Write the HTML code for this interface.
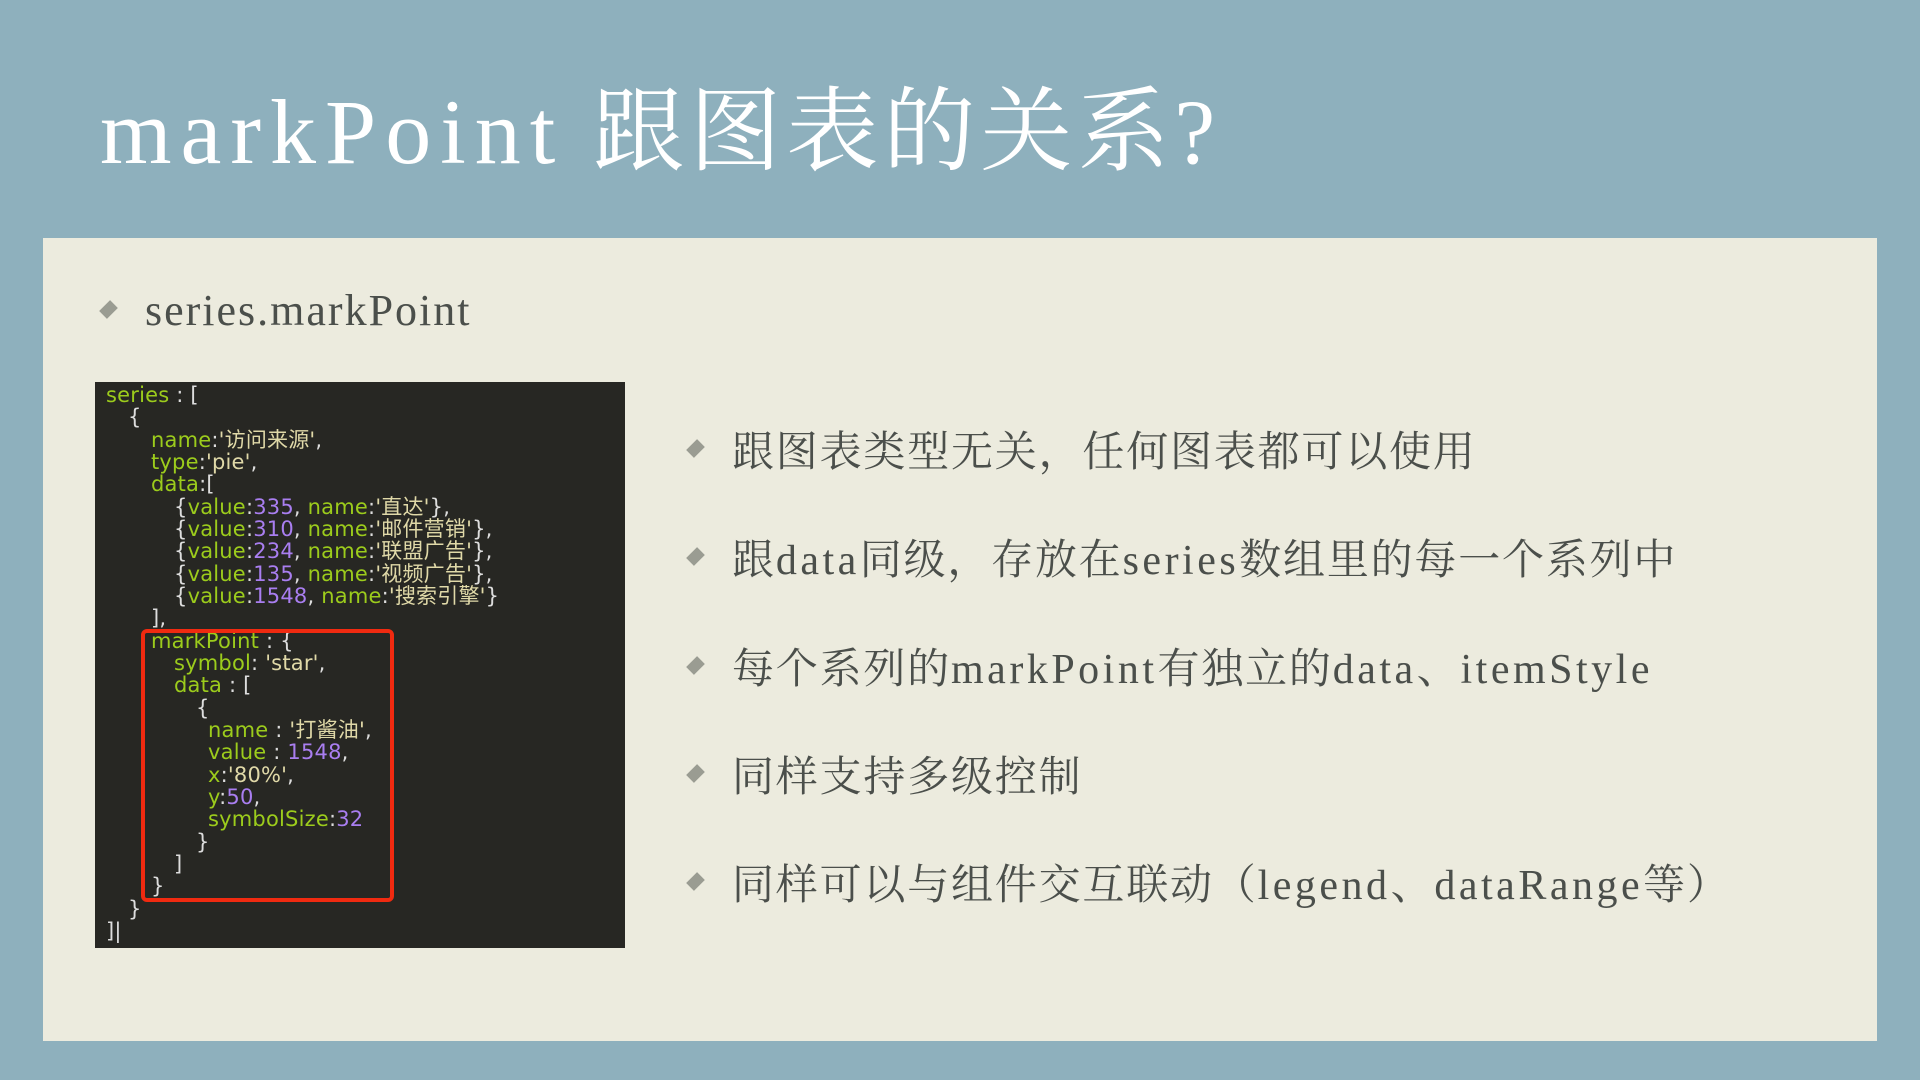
<!DOCTYPE html>
<html><head><meta charset="utf-8"><style>
body{margin:0;width:1920px;height:1080px;overflow:hidden;background:#8eb0bd;font-family:"Liberation Serif","Noto Serif CJK SC",serif;position:relative}
.title{position:absolute;left:100px;top:72px;font-size:92px;color:#fff;white-space:nowrap;line-height:120px;letter-spacing:5px}
.title .l{letter-spacing:9px}
.panel{position:absolute;left:43px;top:238px;width:1834px;height:803px;background:#ecebde}
.sub{position:absolute;left:145px;top:283px;font-size:44px;color:#4b4f4b;line-height:56px;letter-spacing:2px}
.dia{position:absolute;width:11px;height:11px;background:#9a9c92;transform:rotate(45deg) scaleY(1.4)}
.code{position:absolute;left:95px;top:382px;width:530px;height:566px;background:#272723;font-family:"DejaVu Sans","Noto Sans CJK SC",sans-serif;font-size:21px;color:#e0d9a8;white-space:pre;letter-spacing:0.2px}
.code div{position:absolute;height:22.3px;line-height:22.3px}
.g{color:#9ccc1c}.p{color:#a97ef0}.y{color:#d9cd80}.w{color:#ddd}
.red{position:absolute;left:141px;top:629px;width:245px;height:265px;border:4px solid #f02a10;border-radius:6px}
.b{position:absolute;left:732px;font-size:42px;color:#4b4f4b;white-space:nowrap;line-height:56px;letter-spacing:1.8px}
.b i{font-style:normal;letter-spacing:3.5px}
</style></head><body>
<div class="title"><span class="l">markPoint</span> 跟图表的关系?</div>
<div class="panel"></div>
<div class="dia" style="left:103px;top:304px"></div>
<div class="sub">series.markPoint</div>
<div class="code">
<div style="left:11px;top:2px"><span class="g">series</span><span class="w"> : [</span></div>
<div style="left:33px;top:24px" class="w">{</div>
<div style="left:56px;top:47px"><span class="g">name</span><span class="w">:</span>'访问来源'<span class="w">,</span></div>
<div style="left:56px;top:69px"><span class="g">type</span><span class="w">:</span>'pie'<span class="w">,</span></div>
<div style="left:56px;top:91px"><span class="g">data</span><span class="w">:[</span></div>
<div style="left:79px;top:114px"><span class="w">{</span><span class="g">value</span><span class="w">:</span><span class="p">335</span><span class="w">, </span><span class="g">name</span><span class="w">:</span>'直达'<span class="w">},</span></div>
<div style="left:79px;top:136px"><span class="w">{</span><span class="g">value</span><span class="w">:</span><span class="p">310</span><span class="w">, </span><span class="g">name</span><span class="w">:</span>'邮件营销'<span class="w">},</span></div>
<div style="left:79px;top:158px"><span class="w">{</span><span class="g">value</span><span class="w">:</span><span class="p">234</span><span class="w">, </span><span class="g">name</span><span class="w">:</span>'联盟广告'<span class="w">},</span></div>
<div style="left:79px;top:181px"><span class="w">{</span><span class="g">value</span><span class="w">:</span><span class="p">135</span><span class="w">, </span><span class="g">name</span><span class="w">:</span>'视频广告'<span class="w">},</span></div>
<div style="left:79px;top:203px"><span class="w">{</span><span class="g">value</span><span class="w">:</span><span class="p">1548</span><span class="w">, </span><span class="g">name</span><span class="w">:</span>'搜索引擎'<span class="w">}</span></div>
<div style="left:56px;top:225px" class="w">],</div>
<div style="left:56px;top:248px"><span class="g">markPoint</span><span class="w"> : {</span></div>
<div style="left:79px;top:270px"><span class="g">symbol</span><span class="w">: </span>'star'<span class="w">,</span></div>
<div style="left:79px;top:292px"><span class="g">data</span><span class="w"> : [</span></div>
<div style="left:101px;top:315px" class="w">{</div>
<div style="left:113px;top:337px"><span class="g">name</span><span class="w"> : </span>'打酱油'<span class="w">,</span></div>
<div style="left:113px;top:359px"><span class="g">value</span><span class="w"> : </span><span class="p">1548</span><span class="w">,</span></div>
<div style="left:113px;top:382px"><span class="g">x</span><span class="w">:</span>'80%'<span class="w">,</span></div>
<div style="left:113px;top:404px"><span class="g">y</span><span class="w">:</span><span class="p">50</span><span class="w">,</span></div>
<div style="left:113px;top:426px"><span class="g">symbolSize</span><span class="w">:</span><span class="p">32</span></div>
<div style="left:101px;top:449px" class="w">}</div>
<div style="left:79px;top:471px" class="w">]</div>
<div style="left:56px;top:493px" class="w">}</div>
<div style="left:33px;top:516px" class="w">}</div>
<div style="left:11px;top:538px" class="w">]|</div>
</div>
<div class="red"></div>
<div class="dia" style="left:690px;top:443px"></div><div class="b" style="top:425px">跟图表类型无关，任何图表都可以使用</div>
<div class="dia" style="left:690px;top:551px"></div><div class="b" style="top:533px">跟<i>data</i>同级，存放在<i>series</i>数组里的每一个系列中</div>
<div class="dia" style="left:690px;top:660px"></div><div class="b" style="top:642px">每个系列的<i>markPoint</i>有独立的<i>data</i>、<i>itemStyle</i></div>
<div class="dia" style="left:690px;top:768px"></div><div class="b" style="top:750px">同样支持多级控制</div>
<div class="dia" style="left:690px;top:876px"></div><div class="b" style="top:858px">同样可以与组件交互联动（<i>legend</i>、<i>dataRange</i>等）</div>
</body></html>
